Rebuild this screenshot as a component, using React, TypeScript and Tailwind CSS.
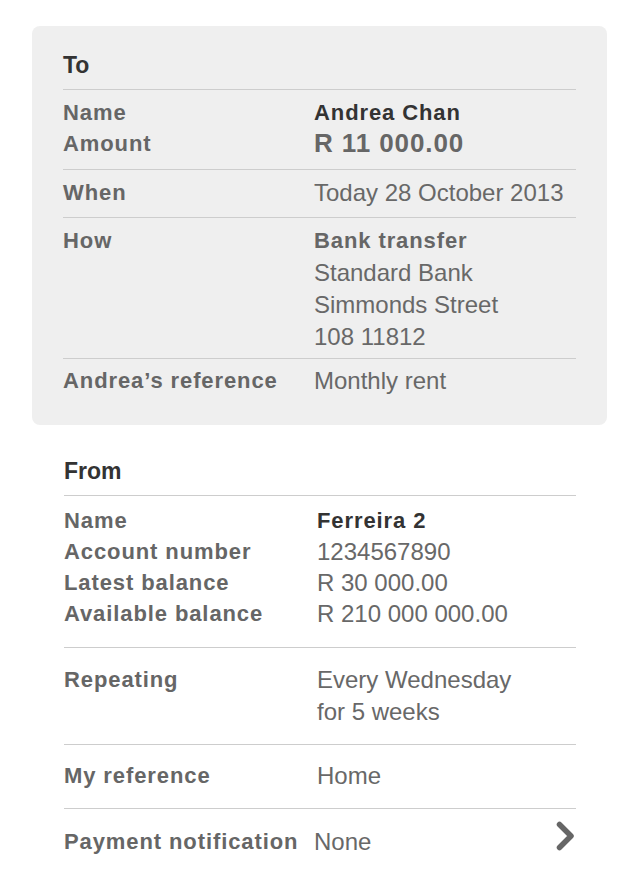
const font = { fontFamily: '"Liberation Sans", Arial, sans-serif' };

function Label({ children }: { children: React.ReactNode }) {
  return (
    <div className="text-[22px] leading-[32px] font-bold tracking-[0.9px] text-[#666] whitespace-nowrap">
      {children}
    </div>
  );
}

function Value({ children, className = '' }: { children: React.ReactNode; className?: string }) {
  return <div className={`text-[24px] leading-[32px] text-[#686868] whitespace-nowrap ${className}`}>{children}</div>;
}

function Chevron() {
  return (
    <svg width="20" height="40" viewBox="0 0 20 40" className="shrink-0 -mt-1">
      <polyline
        points="3.5,4.5 15,16 3.5,27.5"
        fill="none"
        stroke="#666"
        strokeWidth="5.5"
        strokeLinecap="round"
        strokeLinejoin="round"
      />
    </svg>
  );
}

export default function App() {
  return (
    <div className="w-[640px] h-[884px] bg-white overflow-hidden" style={font}>
      {/* To card */}
      <div className="mt-[26px] ml-[32px] mr-[33px] rounded-lg bg-[#efefef] px-[31px] pt-[23px] pb-[28px]">
        <div className="pb-2 text-[23px] leading-[32px] font-bold text-[#333]">To</div>

        <div className="border-t border-[#cdcdcd] pt-[7px] pb-[10px] grid grid-cols-[251px_1fr]">
          <div>
            <div className="text-[22px] leading-[31px] font-bold tracking-[0.9px] text-[#666]">Name</div>
            <div className="text-[22px] leading-[31px] font-bold tracking-[0.9px] text-[#666]">Amount</div>
          </div>
          <div>
            <div className="text-[22px] leading-[31px] font-bold tracking-[0.9px] text-[#333]">Andrea Chan</div>
            <div className="text-[26px] leading-[31px] font-bold tracking-[0.9px] text-[#666]">R 11 000.00</div>
          </div>
        </div>

        <div className="border-t border-[#cdcdcd] pt-[7px] pb-2 grid grid-cols-[251px_1fr]">
          <Label>When</Label>
          <Value>Today 28 October 2013</Value>
        </div>

        <div className="border-t border-[#cdcdcd] pt-[7px] pb-[5px] grid grid-cols-[251px_1fr]">
          <Label>How</Label>
          <div>
            <div className="text-[22px] leading-[32px] font-bold tracking-[0.9px] text-[#666]">Bank transfer</div>
            <Value>Standard Bank</Value>
            <Value>Simmonds Street</Value>
            <Value>108 11812</Value>
          </div>
        </div>

        <div className="border-t border-[#cdcdcd] pt-[6px] grid grid-cols-[251px_1fr]">
          <Label>Andrea’s reference</Label>
          <Value>Monthly rent</Value>
        </div>
      </div>

      {/* From section */}
      <div className="mt-[30px] pl-[64px] pr-[64px]">
        <div className="pb-2 text-[23px] leading-[32px] font-bold text-[#333]">From</div>

        <div className="border-t border-[#cdcdcd] pt-[9px] pb-[18px] grid grid-cols-[253px_1fr]">
          <div>
            {['Name', 'Account number', 'Latest balance', 'Available balance'].map((l) => (
              <div key={l} className="text-[22px] leading-[31px] font-bold tracking-[0.9px] text-[#666] whitespace-nowrap">
                {l}
              </div>
            ))}
          </div>
          <div>
            <div className="text-[22px] leading-[31px] font-bold tracking-[0.9px] text-[#333]">Ferreira 2</div>
            <div className="text-[24px] leading-[31px] text-[#686868]">1234567890</div>
            <div className="text-[24px] leading-[31px] text-[#686868]">R 30 000.00</div>
            <div className="text-[24px] leading-[31px] text-[#686868]">R 210 000 000.00</div>
          </div>
        </div>

        <div className="border-t border-[#cdcdcd] py-4 grid grid-cols-[253px_1fr]">
          <Label>Repeating</Label>
          <div>
            <Value>Every Wednesday</Value>
            <Value>for 5 weeks</Value>
          </div>
        </div>

        <div className="border-t border-[#cdcdcd] pt-[15px] pb-4 grid grid-cols-[253px_1fr]">
          <Label>My reference</Label>
          <Value>Home</Value>
        </div>

        <div className="border-t border-[#cdcdcd] pt-[15px] flex items-center">
          <div className="w-[250px] shrink-0">
            <Label>Payment notification</Label>
          </div>
          <Value>None</Value>
          <div className="ml-auto flex items-center">
            <Chevron />
          </div>
        </div>
      </div>
    </div>
  );
}
